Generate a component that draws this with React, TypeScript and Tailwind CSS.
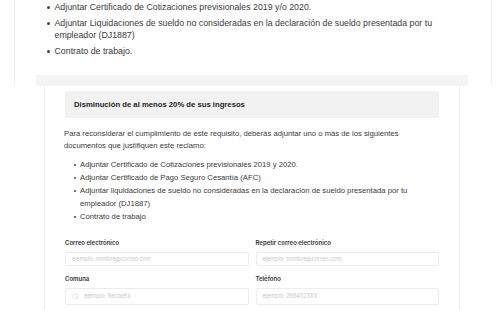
import { Search } from 'lucide-react';

const topItems = [
  'Adjuntar Certificado de Cotizaciones previsionales 2019 y/o 2020.',
  'Adjuntar Liquidaciones de sueldo no consideradas en la declaración de sueldo presentada por tu empleador (DJ1887)',
  'Contrato de trabajo.',
];

const innerItems = [
  'Adjuntar Certificado de Cotizaciones previsionales 2019 y 2020.',
  'Adjuntar Certificado de Pago Seguro Cesantía (AFC)',
  'Adjuntar liquidaciones de sueldo no consideradas en la declaración de sueldo presentada por tu empleador (DJ1887)',
  'Contrato de trabajo',
];

function Field({
  label,
  placeholder,
  tall,
  icon,
}: {
  label: string;
  placeholder: string;
  tall?: boolean;
  icon?: boolean;
}) {
  return (
    <div className="flex flex-col">
      <span className="font-['Inter',sans-serif] text-[6px] font-semibold leading-[10px] text-[#333]">
        {label}
      </span>
      <div
        className={`mt-[4px] flex items-center gap-[5px] rounded-[2px] border border-[#ececec] px-[6px] font-['Inter',sans-serif] text-[5.5px] text-[#c8c8c8] ${
          tall ? 'h-[17px]' : 'h-[14px]'
        }`}
      >
        {icon && <Search size={7} strokeWidth={1.6} className="text-[#c8c8c8]" />}
        <span>{placeholder}</span>
      </div>
    </div>
  );
}

export default function App() {
  return (
    <div className="h-[310px] w-[500px] overflow-hidden bg-white font-['Liberation_Sans',Arial,sans-serif] text-[#3a3a3a]">
      {/* card behind */}
      <div className="ml-[14px] h-[85px] w-[478px] border-x border-[#eeeeee] pt-[1px]">
        <ul className="flex flex-col gap-[4px] pl-[32px] pr-[40px] text-[8.8px] leading-[12px] text-[#3a3a3a]">
          {topItems.map((t) => (
            <li key={t} className="flex">
              <span className="mt-[5px] mr-[5px] h-[2.5px] w-[2.5px] shrink-0 rounded-full bg-[#444]" />
              <span>{t}</span>
            </li>
          ))}
        </ul>
      </div>

      <div className="relative -mt-[10px] ml-[36px] h-[11px] w-[432px] bg-[#f4f4f4]" />

      {/* front card */}
      <div className="ml-[44px] h-[240px] w-[416px] border-x border-[#efefef] pt-[5px]">
        <div className="mx-[20px] flex h-[27px] items-center bg-[#f2f2f2] pl-[9px] text-[7.7px] font-bold text-[#222]">
          Disminución de al menos 20% de sus ingresos
        </div>

        <p className="mt-[10px] w-[360px] pl-[19px] text-[7.7px] leading-[12px]">
          Para reconsiderar el cumplimiento de este requisito, deberás adjuntar uno o más de los siguientes
          documentos que justifiquen este reclamo:
        </p>

        <ul className="mt-[6px] pl-[29px] pr-[40px] text-[7.7px] leading-[13px]">
          {innerItems.map((t) => (
            <li key={t} className="flex">
              <span className="mt-[5.5px] mr-[4px] h-[2px] w-[2px] shrink-0 rounded-full bg-[#444]" />
              <span>{t}</span>
            </li>
          ))}
        </ul>

        <div className="mx-[20px] mt-[15px] grid grid-cols-2 gap-x-[7px]">
          <Field label="Correo electrónico" placeholder="ejemplo: nombre@correo.com" />
          <Field label="Repetir correo electrónico" placeholder="ejemplo: nombre@correo.com" />
        </div>
        <div className="mx-[20px] mt-[8px] grid grid-cols-2 gap-x-[7px]">
          <Field label="Comuna" placeholder="ejemplo: Recoleta" tall icon />
          <Field label="Teléfono" placeholder="ejemplo: 2664523XX" tall />
        </div>
      </div>
    </div>
  );
}
